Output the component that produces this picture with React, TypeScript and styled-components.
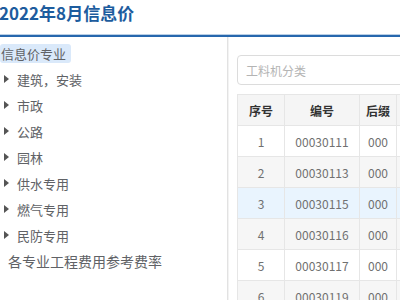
import React from 'react';
import styled, { createGlobalStyle } from 'styled-components';

const GlobalStyle = createGlobalStyle`
  html, body { margin: 0; padding: 0; background: #fff; }
  body { font-family: "Noto Sans CJK SC", "Noto Sans", sans-serif; overflow: hidden; }
  * { box-sizing: border-box; }
`;

const Page = styled.div`
  width: 400px; height: 300px; overflow: hidden; display: flex; flex-direction: column;
`;
const Header = styled.div`
  height: 37px; flex: none; border-bottom: 2px solid #2767ad; box-shadow: 0 -1px 0 #b9cfe6 inset;
`;
const Title = styled.h1`
  margin: 0 0 0 -1px; font-size: 17px; line-height: 25px; font-weight: 700; color: #1d5c9e; white-space: nowrap;
`;
const Body = styled.div`
  flex: 1; display: flex; min-height: 0;
`;
const Side = styled.div`
  width: 228px; flex: none; padding-top: 3px; border-right: 1px solid #e2e2e2; box-shadow: 1px 0 0 #f3f3f3;
`;
const TreeRow = styled.div<{ $indent?: number }>`
  height: 26px; display: flex; align-items: center; gap: 8px; padding-left: ${p => p.$indent ?? 0}px;
  font-size: 13px; color: #606266; white-space: nowrap;
`;
const RootLabel = styled.span`
  display: inline-block; height: 19px; line-height: 19px; padding: 0 5px 0 1px; border-radius: 3px;
  background: #dae9fa;
`;
const Arrow = styled.span`
  width: 0; height: 0; border-left: 5px solid #555; border-top: 4px solid transparent; border-bottom: 4px solid transparent;
`;
const PlainLabel = styled.span`
  font-size: 14px;
`;
const Main = styled.div`
  flex: 1; min-width: 0; padding: 18px 0 0 9px; overflow: hidden;
`;
const Search = styled.input`
  display: block; width: 200px; height: 30px; border: 1px solid #dcdcdc; border-radius: 4px; padding: 0 8px;
  font: 12px "Noto Sans CJK SC", sans-serif; color: #555; outline: none;
  &::placeholder { color: #b4b4b4; }
`;
const Table = styled.table`
  margin-top: 9px; border-collapse: collapse; table-layout: fixed; width: 300px;
  font-size: 12px; color: #707070;
`;
const Th = styled.th`
  height: 31px; background: #f5f5f5; color: #333; font-weight: 700; text-align: center;
  border: 1px solid #e6e6e6; padding: 0;
`;
const Tr = styled.tr<{ $bg: string }>`
  background: ${p => p.$bg};
`;
const Td = styled.td`
  height: 31px; text-align: center; border: 1px solid #e6e6e6; padding: 0; white-space: nowrap;
`;

const items = ['建筑，安装', '市政', '公路', '园林', '供水专用', '燃气专用', '民防专用'];
const rows = [
  ['1', '00030111'], ['2', '00030113'], ['3', '00030115'],
  ['4', '00030116'], ['5', '00030117'], ['6', '00030119'],
];

export default function App() {
  return (
    <Page>
      <GlobalStyle />
      <Header>
        <Title>2022年8月信息价</Title>
      </Header>
      <Body>
        <Side>
          <TreeRow><RootLabel>信息价专业</RootLabel></TreeRow>
          {items.map(t => (
            <TreeRow key={t} $indent={4}><Arrow />{t}</TreeRow>
          ))}
          <TreeRow $indent={8}><PlainLabel>各专业工程费用参考费率</PlainLabel></TreeRow>
        </Side>
        <Main>
          <Search placeholder="工料机分类" />
          <Table>
            <colgroup>
              <col style={{ width: 47 }} /><col style={{ width: 75 }} /><col style={{ width: 37 }} /><col style={{ width: 141 }} />
            </colgroup>
            <thead>
              <tr><Th>序号</Th><Th>编号</Th><Th>后缀</Th><Th></Th></tr>
            </thead>
            <tbody>
              {rows.map(([n, code], i) => (
                <Tr key={n} $bg={i === 2 ? '#e9f4fe' : i % 2 ? '#f6f6f6' : '#fff'}>
                  <Td>{n}</Td><Td>{code}</Td><Td>000</Td><Td></Td>
                </Tr>
              ))}
            </tbody>
          </Table>
        </Main>
      </Body>
    </Page>
  );
}
